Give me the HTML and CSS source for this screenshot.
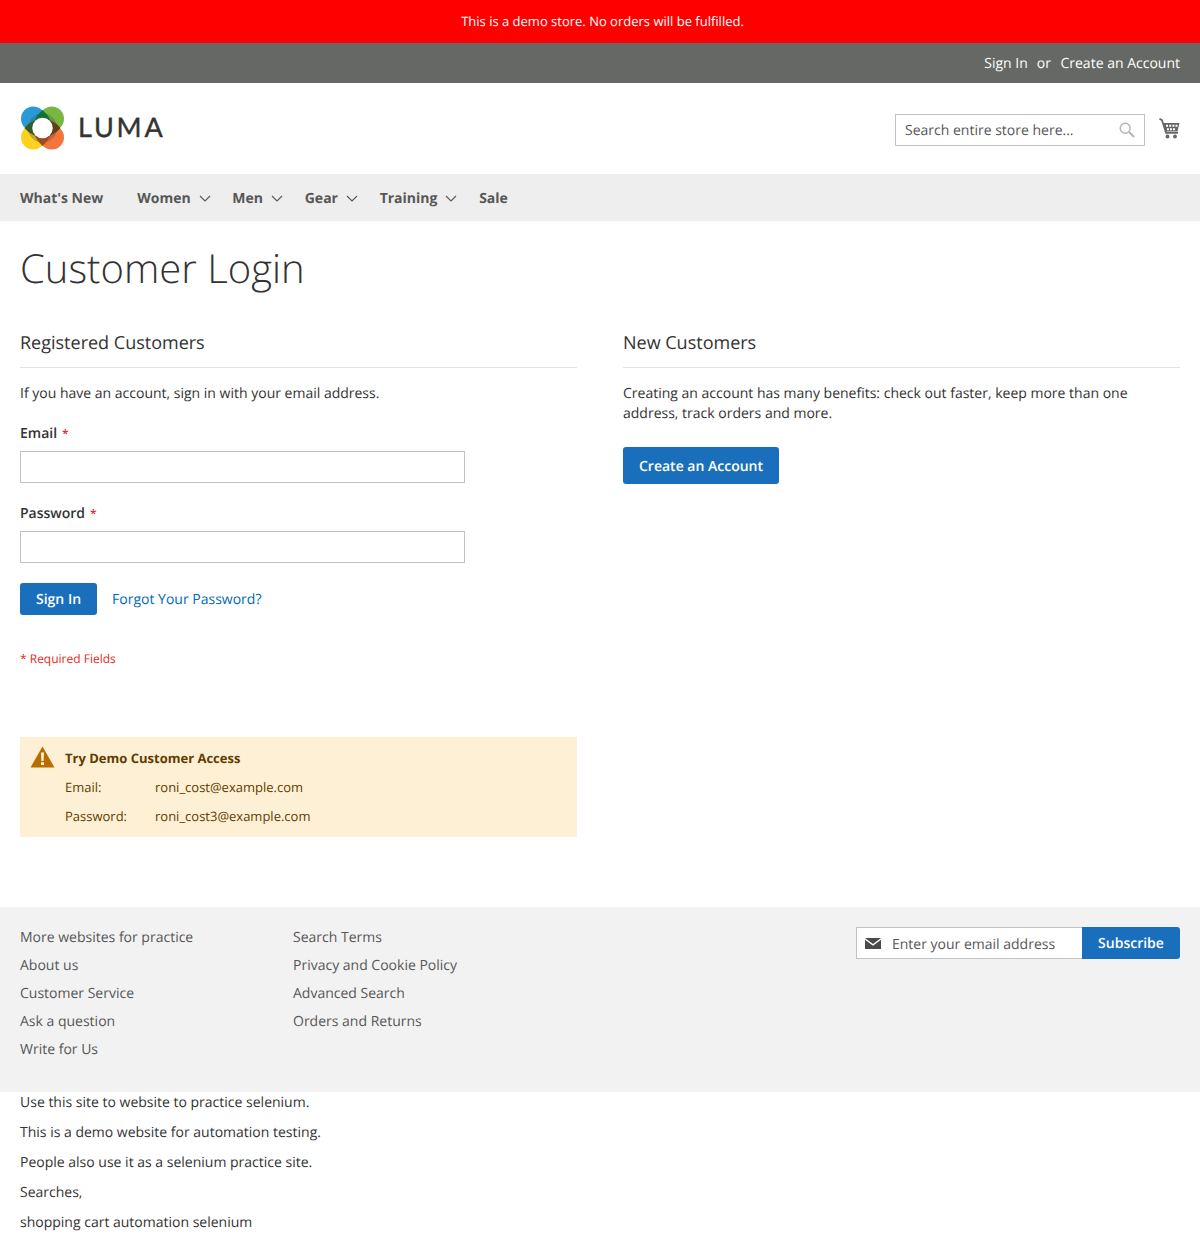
FILE: index.html
```html
<!DOCTYPE html>
<html lang="en">
<head>
<meta charset="utf-8">
<title>Customer Login</title>
<link rel="stylesheet" href="styles.css">
</head>
<body>
<div class="demo-banner">This is a demo store. No orders will be fulfilled.</div>
<div class="panel"><a href="#">Sign In</a><span class="or">or</span><a href="#">Create an Account</a></div>
<header class="header">
  <a class="logo" href="#">
    <svg class="logo-mark" width="43" height="44" viewBox="0 0 44 44">
      <circle cx="12.500" cy="12.500" r="12.500" fill="#2a9ad6"/>
      <circle cx="31.500" cy="12.500" r="12.500" fill="#7ab642"/>
      <circle cx="12.500" cy="31.500" r="12.500" fill="#fdd21f"/>
      <circle cx="31.500" cy="31.500" r="12.500" fill="#f4743b"/>
      <circle cx="22" cy="22" r="15" fill="#4a4a40" opacity=".3"/>
      <path d="M22 3.500Q27 7.500 30 14L22 22 14 14Q17 7.500 22 3.500Z" fill="#0f7038"/>
      <path d="M22 3.500Q27 7.500 30 14L22 22 14 14Q17 7.500 22 3.500Z" fill="#5f3f14" transform="rotate(90 22 22)"/>
      <path d="M22 3.500Q27 7.500 30 14L22 22 14 14Q17 7.500 22 3.500Z" fill="#9c4a1e" transform="rotate(180 22 22)"/>
      <path d="M22 3.500Q27 7.500 30 14L22 22 14 14Q17 7.500 22 3.500Z" fill="#35592a" transform="rotate(270 22 22)"/>
      <circle cx="22" cy="22" r="10.500" fill="#fff"/>
    </svg>
    <span class="logo-text">LUMA</span>
  </a>
  <div class="header-tools">
    <div class="search"><span class="search-text">Search entire store here...</span>
      <svg width="16" height="16" viewBox="0 0 16 16" fill="none" stroke="#b5b5b5"><circle cx="6.200" cy="6.200" r="5" stroke-width="1.400"/><path d="M10 10l5 5" stroke-width="2"/></svg>
    </div>
    <svg class="cart" width="21" height="21" viewBox="0 0 21 21">
      <path d="M.5.800L3 2.200 7 14.800H19" fill="none" stroke="#666" stroke-width="1.700"/>
      <path d="M4 5H20.500L18.500 13.500H6.800Z" fill="#666"/>
      <path d="M7 6.800h2v2H7zM10.200 6.800h2v2h-2zM13.400 6.800h2v2h-2zM16.500 6.800h2v2h-2zM8 10.200h2v2H8zM11 10.200h2v2h-2zM14 10.200h2v2h-2z" fill="#fff"/>
      <circle cx="8.500" cy="18.500" r="1.900" fill="#666"/><circle cx="16" cy="18.500" r="1.900" fill="#666"/>
    </svg>
  </div>
</header>
<nav class="nav">
  <a class="nav-item plain" href="#">What's New</a>
  <a class="nav-item" href="#">Women<svg class="chev" viewBox="0 0 12 7"><path d="M1 1l5 5 5-5"/></svg></a>
  <a class="nav-item" href="#">Men<svg class="chev" viewBox="0 0 12 7"><path d="M1 1l5 5 5-5"/></svg></a>
  <a class="nav-item" href="#">Gear<svg class="chev" viewBox="0 0 12 7"><path d="M1 1l5 5 5-5"/></svg></a>
  <a class="nav-item" href="#">Training<svg class="chev" viewBox="0 0 12 7"><path d="M1 1l5 5 5-5"/></svg></a>
  <a class="nav-item" href="#">Sale</a>
</nav>
<main class="main">
  <h1 class="title">Customer Login</h1>
  <div class="columns">
    <section class="col">
      <h2 class="col-title">Registered Customers</h2>
      <p class="intro">If you have an account, sign in with your email address.</p>
      <label class="label">Email<span class="req">*</span></label>
      <div class="input"></div>
      <label class="label">Password<span class="req">*</span></label>
      <div class="input"></div>
      <div class="actions"><a class="btn" href="#">Sign In</a><a class="forgot" href="#">Forgot Your Password?</a></div>
      <p class="required">* Required Fields</p>
      <div class="notice">
        <svg class="warn" width="25" height="22" viewBox="0 0 25 22"><path d="M12.500.500L24.500 21.500H.500Z" fill="#b96d00"/><path d="M11 6.500h3l-.4 8.500h-2.200ZM11 16.300h3v2.800h-3Z" fill="#fdf0d5"/></svg>
        <div class="notice-head">Try Demo Customer Access</div>
        <div class="notice-row"><span class="notice-key">Email:</span><span>roni_cost@example.com</span></div>
        <div class="notice-row"><span class="notice-key">Password:</span><span>roni_cost3@example.com</span></div>
      </div>
    </section>
    <section class="col">
      <h2 class="col-title">New Customers</h2>
      <p class="intro">Creating an account has many benefits: check out faster, keep more than one address, track orders and more.</p>
      <a class="btn btn-large" href="#">Create an Account</a>
    </section>
  </div>
</main>
<footer class="footer">
  <ul class="links links-a">
    <li>More websites for practice</li><li>About us</li><li>Customer Service</li><li>Ask a question</li><li>Write for Us</li>
  </ul>
  <ul class="links">
    <li>Search Terms</li><li>Privacy and Cookie Policy</li><li>Advanced Search</li><li>Orders and Returns</li>
  </ul>
  <form class="subscribe">
    <div class="sub-input">
      <svg width="16" height="11" viewBox="0 0 16 11"><path d="M0 0H16L8 6Z" fill="#4a4a4a"/><path d="M0 1.800L8 7.800 16 1.800V11H0Z" fill="#4a4a4a"/></svg>
      <span class="sub-text">Enter your email address</span>
    </div>
    <a class="sub-btn" href="#">Subscribe</a>
  </form>
</footer>
<div class="seo">
  <p>Use this site to website to practice selenium.</p>
  <p>This is a demo website for automation testing.</p>
  <p>People also use it as a selenium practice site.</p>
  <p>Searches,</p>
  <p>shopping cart automation selenium</p>
</div>
</body>
</html>
```
FILE: styles.css
```css
* { box-sizing: border-box; }
html, body { margin: 0; padding: 0; }
body { font-family: "Open Sans", sans-serif; font-size: 14px; line-height: 20px; color: #333; background: #fff; text-rendering: geometricPrecision; }
a { color: inherit; text-decoration: none; }
p { margin: 0; }
.demo-banner { height: 43px; background: #ff0000; color: #fff; font-size: 13px; line-height: 43px; text-align: center; padding-left: 5px; }
.panel { height: 40px; background: #666865; color: #fff; display: flex; justify-content: flex-end; align-items: center; padding: 2px 20px 0; }
.or { margin: 0 9.500px 0 9px; }
.header { height: 91px; padding: 23px 20px 0; display: flex; justify-content: space-between; }
.logo { display: flex; align-items: flex-start; padding-left: 1px; }
.logo-mark { display: block; flex: none; }
.logo-text { margin-left: 14px; font-size: 27px; line-height: 42px; letter-spacing: 2.800px; color: #333; font-family: "Lato", sans-serif; font-weight: 400; -webkit-text-stroke: .4px #333; }
.header-tools { display: flex; align-items: flex-start; padding-top: 8px; }
.search { width: 250px; height: 32px; border: 1px solid #c2c2c2; display: flex; justify-content: space-between; align-items: center; padding: 0 9px; color: #575757; }
.search-text { padding-top: 2px; }
.cart { margin: 4px 0 0 14px; }
.nav { height: 47px; background: #eee; display: flex; align-items: center; padding: 2px 0 0 20px; color: #575757; font-weight: 700; }
.nav-item { display: flex; align-items: center; margin-right: 21.700px; }
.plain { margin-right: 34px; }
.chev { width: 12px; height: 7px; margin-left: 8px; fill: none; stroke: #575757; stroke-width: 1.100; }
.main { padding: 0 20px; }
.title { margin: 0; padding-top: 21px; font-size: 40px; line-height: 52px; font-weight: 300; color: #333; }
.columns { display: flex; gap: 46px; margin-top: 32px; }
.col { width: 557px; }
.col-title { margin: 0 0 16px; font-size: 18px; line-height: 24px; font-weight: 400; padding: 5px 0 12px; border-bottom: 1px solid #e3e3e3; }
.intro { margin-bottom: -1px; }
.label { display: block; font-weight: 600; margin-top: 21px; margin-bottom: 7px; }
.req { color: #e02b27; font-size: 12px; margin-left: 5px; }
.input { width: 445px; height: 32px; border: 1px solid #c2c2c2; background: #fff; }
.actions { display: flex; align-items: center; margin-top: 20px; }
.btn { display: inline-block; background: #1a6fbd; color: #fff; font-weight: 600; height: 32px; line-height: 34px; padding: 0 16px; border-radius: 3px; }
.btn-large { height: 37px; line-height: 39px; margin-top: 24px; }
.forgot { color: #006bb4; margin-left: 15px; padding-top: 2px; }
.required { color: #e02b27; font-size: 12px; margin-top: 34px; }
.notice { position: relative; margin-top: 68px; height: 100px; background: #fdf0d5; color: #633b00; padding: 11px 0 0 45px; font-size: 13px; }
.warn { position: absolute; left: 10px; top: 9px; }
.notice-head { font-weight: 700; }
.notice-row { display: flex; margin-top: 9px; }
.notice-key { width: 90px; }
.footer { margin-top: 70px; height: 185px; background: #f2f2f2; padding: 20px 20px 0; display: flex; }
.links { list-style: none; margin: 1px 0 0; padding: 0; color: #575757; width: 273px; }
.links li { margin-bottom: 8px; }
.subscribe { display: flex; margin-left: auto; height: 32px; }
.sub-input { width: 226px; height: 32px; border: 1px solid #c2c2c2; border-right: 0; background: #fff; display: flex; align-items: center; padding-left: 8px; color: #575757; }
.sub-text { margin-left: 11px; padding-top: 3px; }
.sub-btn { width: 98px; background: #1a6fbd; color: #fff; font-weight: 600; text-align: center; line-height: 34px; border-radius: 0 3px 3px 0; }
.seo { padding: 1px 20px 0; }
.seo p { line-height: 20px; margin-bottom: 10px; }
```
